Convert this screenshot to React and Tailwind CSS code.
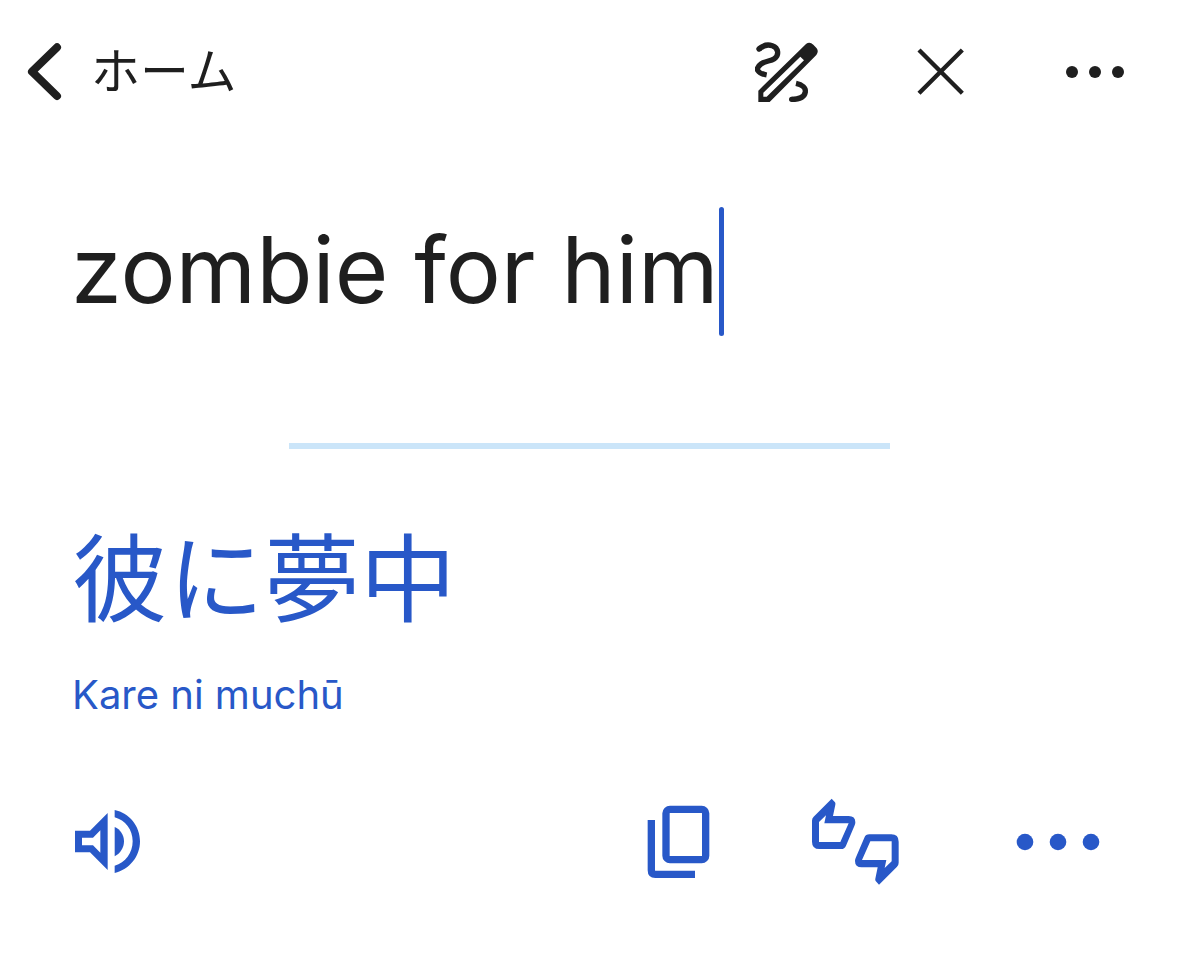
import { useState } from "react";

function BackIcon() {
  return (
    <svg viewBox="51 36 108 180" className="h-15 w-9" fill="none" stroke="currentColor" strokeWidth="24" strokeLinecap="round" strokeLinejoin="round" aria-hidden="true">
      <path d="M141 52 66 125l75 73" />
    </svg>
  );
}

function HandwritingIcon() {
  return (
    <svg viewBox="42 30 192 192" className="size-16" aria-hidden="true">
      <g fill="none" stroke="currentColor" strokeWidth="16">
        <path d="M55 57C67 45 82 43 94 47C113 53 115 76 100 86C88 94 74 92 60 102C40 117 50 130 77 135" />
        <path d="M54 57L56 55" strokeLinecap="round" />
        <path d="M165 160C184 164 195 174 193 186C190 203 170 208 152 208" />
        <path d="M152 208h1" strokeLinecap="round" />
      </g>
      <path fill="currentColor" fillRule="evenodd" d="M52 216v-34L195 42q11-8 22 2l10 11q7 9-1 20L86 216zM67 200h10L189 91l-11-11L67 188z" />
    </svg>
  );
}

function CloseIcon() {
  return (
    <svg viewBox="54 54 144 144" className="size-12" fill="none" stroke="currentColor" strokeWidth="13" aria-hidden="true">
      <path d="M60 60 190 190M190 60 60 190" />
    </svg>
  );
}

function SmallDots() {
  return (
    <svg viewBox="0 0 64 16" className="h-4 w-16" fill="currentColor" aria-hidden="true">
      <circle cx="9" cy="8" r="6" />
      <circle cx="32" cy="8" r="6" />
      <circle cx="55" cy="8" r="6" />
    </svg>
  );
}

function SpeakerIcon() {
  return (
    <svg viewBox="42 42 198 198" className="size-[66px]" fill="currentColor" aria-hidden="true">
      <path fillRule="evenodd" d="M45 107h45l53-53v171l-53-53H45zM66 128v23h33l22 22v-67l-22 22z" />
      <path d="M164 96c17 7 28 24 28 43s-11 37-28 45z" />
      <path d="M164 45c44 9 76 48 76 94s-32 85-76 95v-22c32-9 54-38 54-73s-22-63-54-72z" />
    </svg>
  );
}

function CopyIcon() {
  return (
    <svg viewBox="33 27 192 228" className="h-[76px] w-16" fill="none" stroke="currentColor" strokeWidth="22" aria-hidden="true">
      <rect x="93" y="43" width="119" height="151" rx="12" />
      <path d="M49 75v151q0 12 12 12h119" />
    </svg>
  );
}

function FeedbackIcon() {
  return (
    <svg viewBox="33 24 264 264" className="size-22" fill="currentColor" fillRule="evenodd" aria-hidden="true">
      <path d="M95 26l10 11q2 3 1 7l-7 34h47q20 0 20 19 0 5-2 9l-26 61q-4 10-15 10H58q-22 0-22-22V92q0-7 5-12zM78 76L57 96v60h64l25-56H73z" />
      <path d="M237 284l-10-11q-2-3-1-7l7-34h-48q-20 0-20-19 0-5 2-9l26-61q4-10 15-10h66q22 0 22 22v63q0 7-5 12zM254 234l21-20v-60h-64l-25 56h73z" />
    </svg>
  );
}

function LargeDots() {
  return (
    <svg viewBox="0 0 116 18" className="h-[18px] w-[116px]" fill="currentColor" aria-hidden="true">
      <circle cx="25" cy="9" r="8.3" />
      <circle cx="58" cy="9" r="8.3" />
      <circle cx="91" cy="9" r="8.3" />
    </svg>
  );
}

export default function App() {
  const [text, setText] = useState("zombie for him");

  return (
    <div className="min-h-screen bg-white font-['Inter','Noto_Sans_CJK_JP',sans-serif] text-[#1f1f1f]">
      <header className="flex h-36 items-center justify-between pr-13 pl-[27px]">
        <a href="#home" className="flex items-center gap-7 text-[49px]">
          <BackIcon />
          <span>ホーム</span>
        </a>
        <div className="flex items-center gap-[98px]">
          <button type="button" aria-label="手書き入力"><HandwritingIcon /></button>
          <button type="button" aria-label="閉じる"><CloseIcon /></button>
          <button type="button" aria-label="メニュー"><SmallDots /></button>
        </div>
      </header>

      <main>
        <div className="flex items-center px-[71px] pt-[63px]">
          <input
            type="text"
            aria-label="原文"
            value={text}
            onChange={(e) => setText(e.target.value)}
            className="field-sizing-content h-32 max-w-full bg-transparent pb-1 text-[92px] caret-transparent outline-none"
          />
          <span className="h-[129px] w-[5px] shrink-0 rounded-full bg-[#2858c8]" />
        </div>

        <hr className="mx-auto mt-[107px] h-1.5 w-[51%] border-0 bg-[#cbe5f9]" />

        <section className="px-[72px] pt-[70px] text-[#2858c8]" lang="ja">
          <p className="text-[96px] leading-[120px]">彼に夢中</p>
          <p className="mt-[26px] text-[40px] leading-[60px]">Kare ni muchū</p>
        </section>

        <div className="mt-[73px] flex items-center justify-between pr-[63px] pl-[74px] text-[#2858c8]">
          <button type="button" aria-label="音声を再生"><SpeakerIcon /></button>
          <div className="flex items-center gap-[101px]">
            <button type="button" aria-label="コピー"><CopyIcon /></button>
            <button type="button" aria-label="評価"><FeedbackIcon /></button>
            <button type="button" aria-label="その他"><LargeDots /></button>
          </div>
        </div>
      </main>
    </div>
  );
}
